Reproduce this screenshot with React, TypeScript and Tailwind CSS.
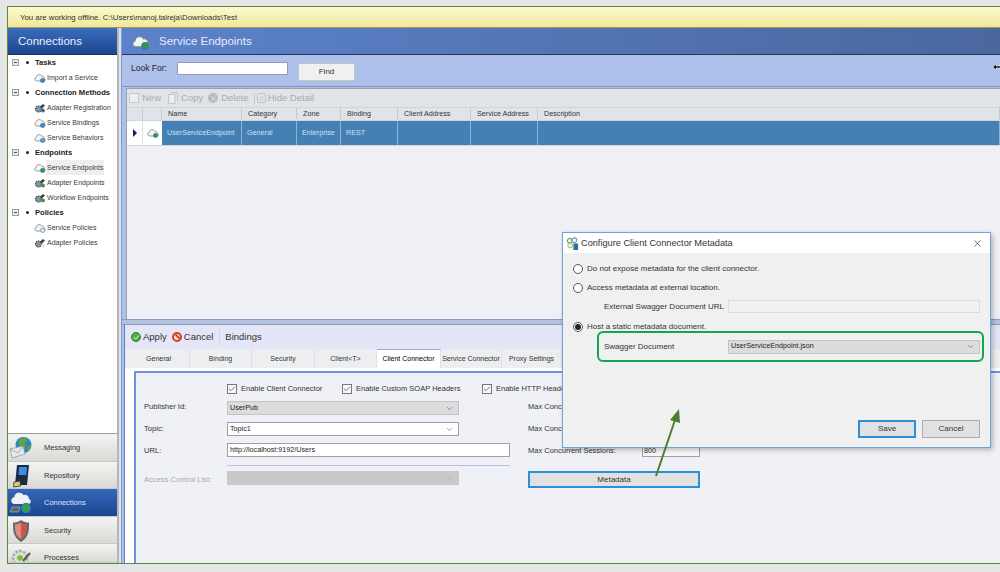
import { ReactNode } from 'react'
import { ChevronDown, ChevronsUp, X, Check } from 'lucide-react'

const font = { fontFamily: '"Liberation Sans", Arial, sans-serif' }

function CloudIcon({ badge = '#2f9a4e', className = 'w-[12px] h-[10px]' }: { badge?: string; className?: string }) {
  return (
    <svg viewBox="0 0 12 10" className={className}>
      <path d="M2.400 8a1.900 1.900 0 0 1-.2-3.700A2.900 2.900 0 0 1 7.600 3a2.300 2.300 0 0 1 2.800 2.500A1.300 1.300 0 0 1 10 8z" fill="#f2f4f6" stroke="#7d8893" strokeWidth="0.800" />
      <circle cx="8.600" cy="7.400" r="2.200" fill={badge} stroke="#2d6ba0" strokeWidth="0.500" />
    </svg>
  )
}

function GearIcon({ tone = '#2f6f9a' }: { tone?: string }) {
  return (
    <svg viewBox="0 0 12 10" className="w-[12px] h-[10px]">
      <circle cx="4.500" cy="6" r="3" fill="#8a939b" stroke="#39424b" strokeWidth="1.200" strokeDasharray="1.400 0.800" />
      <path d="M6 3.500l3-2.500 2 1.500-3 3z" fill="#39424b" />
      <circle cx="9" cy="7.500" r="1.900" fill={tone} />
    </svg>
  )
}

function Row({ label, icon, active }: { label: string; icon: ReactNode; active?: boolean }) {
  return (
    <div className="h-[15px] flex items-center pl-[26px]">
      <span className="w-[12px] flex items-center shrink-0">{icon}</span>
      <span className={`px-[1px] h-[15px] leading-[15px] text-[7px] whitespace-nowrap text-[#3a3a3a] ${active ? 'bg-[#eeeeee]' : ''}`}>{label}</span>
    </div>
  )
}

function Group({ label }: { label: string }) {
  return (
    <div className="h-[15px] flex items-center pl-[4px]">
      <span className="w-[7px] h-[7px] border border-[#9aa0a8] bg-[#e8eaee] flex items-center justify-center shrink-0">
        <span className="w-[3px] h-px bg-[#555]" />
      </span>
      <span className="w-[3px] h-[3px] rounded-full bg-[#222] ml-[7px] shrink-0" />
      <span className="ml-[6px] text-[7.600px] font-bold whitespace-nowrap text-[#1c1c1c]">{label}</span>
    </div>
  )
}

function NavIcon({ name }: { name: string }) {
  if (name === 'Messaging')
    return (
      <svg viewBox="0 0 24 24" className="w-[24px] h-[24px] shrink-0">
        <circle cx="14.500" cy="9" r="8" fill="#2f83c6" />
        <path d="M9 5c2-3 7-4 9-2s-3 3-2 6 0 5-2 5-4-6-5-9z M19 10c2-1 3-1 3 0s-2 5-4 5z" fill="#5ea53c" />
        <path d="M1 13l13-3 2 8-13 4z" fill="#e6e8ec" stroke="#8a939c" strokeWidth="0.700" />
        <path d="M1 13l8 4 5-7" fill="none" stroke="#8a939c" strokeWidth="0.700" />
      </svg>
    )
  if (name === 'Repository')
    return (
      <svg viewBox="0 0 24 24" className="w-[24px] h-[24px] shrink-0">
        <path d="M8 1h12l-2 20H6z" fill="#1d2a40" />
        <path d="M10 3h8l-.6 8H9.500z" fill="#3d8ce0" />
        <path d="M5 18l6-1 .5 5-7 1z" fill="#d9cf78" stroke="#2d2d2d" strokeWidth="0.800" />
      </svg>
    )
  if (name === 'Connections')
    return (
      <svg viewBox="0 0 24 24" className="w-[24px] h-[24px] shrink-0">
        <path d="M5 13a3.400 3.400 0 0 1 .3-6.700A5 5 0 0 1 14.500 4a4 4 0 0 1 5.500 4 2.600 2.600 0 0 1 0 5z" fill="#eef2f7" />
        <circle cx="17" cy="17" r="4.600" fill="#3c9a52" stroke="#2a7ab8" strokeWidth="1.100" />
        <path d="M3 16h8l-1.500 5H1z" fill="#5d6670" stroke="#c9ced4" strokeWidth="0.500" />
      </svg>
    )
  if (name === 'Security')
    return (
      <svg viewBox="0 0 24 24" className="w-[24px] h-[24px] shrink-0">
        <path d="M12 1c3 2 5 2.500 8 2.500 0 9 0 14-8 19.500-8-5.500-8-10.500-8-19.500 3 0 5-.5 8-2.500z" fill="#65696e" />
        <path d="M12 3.500c2.300 1.500 4 2 6 2 0 6 0 11-6 14.500z" fill="#c9564c" />
        <path d="M12 3.500c-2.300 1.500-4 2-6 2 0 6 0 11 6 14.500z" fill="#de8a80" />
      </svg>
    )
  return (
    <svg viewBox="0 0 24 24" className="w-[24px] h-[24px] shrink-0">
      <circle cx="11" cy="12" r="7" fill="#dcdedc" stroke="#a4a8a8" strokeWidth="2.400" strokeDasharray="2.500 1.500" />
      <circle cx="11" cy="12" r="2.800" fill="#7dbd2e" />
      <path d="M14 15l7-8" stroke="#55585a" strokeWidth="2" />
      <path d="M7 22l8-5" stroke="#3a3c3d" strokeWidth="2" />
    </svg>
  )
}

function NavButton({ label, active, h }: { label: string; active?: boolean; h: string }) {
  return (
    <div className={`${h} overflow-hidden border-b border-[#c8c8c8] shrink-0 ${active ? 'bg-gradient-to-b from-[#3468bc] to-[#1d468e]' : 'bg-gradient-to-b from-[#f4f4f2] to-[#d9d9d6]'}`}>
      <div className="h-[27px] flex items-center gap-[11px] pl-[1px]">
        <NavIcon name={label} />
        <span className={`text-[7.500px] pt-[1px] ${active ? 'text-[#dfe8f8]' : 'text-[#333]'}`}>{label}</span>
      </div>
    </div>
  )
}

function Tab({ label, w, active }: { label: string; w: string; active?: boolean }) {
  return (
    <div className={`${w} shrink-0 text-center text-[7px] whitespace-nowrap border-r border-[#dfe1e6] ${active ? 'bg-white h-[19px] leading-[17px] border-t border-t-[#8fa8e0]' : 'leading-[19px] text-[#333]'}`}>{label}</div>
  )
}

function Select({ value, w, disabled, gray }: { value?: string; w: string; disabled?: boolean; gray?: boolean }) {
  return (
    <div className={`${w} h-[14px] flex items-center justify-between pl-[2px] pr-[4px] border text-[7.200px] text-[#222] ${disabled ? 'bg-[#c9c9c9] border-[#c9c9c9]' : gray ? 'bg-[#dcdcdc] border-[#c4c4c4]' : 'bg-white border-[#a0a0a0]'}`}>
      <span>{value}</span>
      <ChevronDown className={`w-[9px] h-[9px] ${disabled ? 'text-[#aaa]' : 'text-[#555]'}`} strokeWidth={1.500} />
    </div>
  )
}

function CheckLabel({ label, w }: { label: string; w: string }) {
  return (
    <div className={`${w} flex items-center gap-[4px] shrink-0`}>
      <span className="w-[10px] h-[10px] border border-[#777] bg-[#f8f8f8] flex items-center justify-center shrink-0">
        <Check className="w-[8px] h-[8px] text-[#333]" strokeWidth={2} />
      </span>
      <span className="text-[7.500px] text-[#333] whitespace-nowrap">{label}</span>
    </div>
  )
}

function Radio({ on, label }: { on?: boolean; label: string }) {
  return (
    <div className="flex items-center gap-[4px] h-[12px]">
      <span className="w-[10px] h-[10px] rounded-full border border-[#555] bg-white flex items-center justify-center shrink-0">
        {on && <span className="w-[6px] h-[6px] rounded-full bg-[#222]" />}
      </span>
      <span className="text-[8px] text-[#333] whitespace-nowrap">{label}</span>
    </div>
  )
}

const headers = [
  ['', 'w-[16px]'],
  ['', 'w-[19px]'],
  ['Name', 'w-[80px]'],
  ['Category', 'w-[55px]'],
  ['Zone', 'w-[44px]'],
  ['Binding', 'w-[57px]'],
  ['Client Address', 'w-[73px]'],
  ['Service Address', 'w-[67px]'],
  ['Description', 'flex-1'],
]

const cells = [
  ['UserServiceEndpoint', 'w-[80px]'],
  ['General', 'w-[55px]'],
  ['Enterprise', 'w-[44px]'],
  ['REST', 'w-[57px]'],
  ['', 'w-[73px]'],
  ['', 'w-[67px]'],
  ['', 'flex-1'],
]

export default function App() {
  return (
    <div className="relative w-[1000px] h-[572px] overflow-hidden bg-[#e6e6e6] pt-[6px] pl-[7px]" style={font}>
      <div className="h-[558px] border-t border-l border-b border-[#5c8a3c] flex flex-col overflow-hidden">
        {/* barra offline */}
        <div className="h-[21px] shrink-0 flex items-center pl-[12px] pt-[1px] text-[7.800px] text-[#333] bg-gradient-to-b from-[#fbf9d0] to-[#f1e89b] border-b border-[#a39a55]">
          You are working offline. C:\Users\manoj.talreja\Downloads\Test
        </div>

        <div className="flex flex-1 min-h-0">
          {/* sidebar */}
          <div className="w-[111px] shrink-0 flex flex-col border-r-2 border-[#b5b5b5]">
            <div className="h-[27px] shrink-0 flex items-center pl-[10px] pt-[1px] text-[11.500px] text-[#e8eefa] bg-gradient-to-b from-[#3a6cbc] to-[#1c4690] border-b border-[#16305f]">
              Connections
            </div>
            <div className="flex-1 bg-white border-b border-[#9a9a9a]">
              <Group label="Tasks" />
              <Row label="Import a Service" icon={<CloudIcon badge="#3f86c8" />} />
              <Group label="Connection Methods" />
              <Row label="Adapter Registration" icon={<GearIcon />} />
              <Row label="Service Bindings" icon={<CloudIcon badge="#3f86c8" />} />
              <Row label="Service Behaviors" icon={<CloudIcon badge="#5f9ccc" />} />
              <Group label="Endpoints" />
              <Row label="Service Endpoints" icon={<CloudIcon />} active />
              <Row label="Adapter Endpoints" icon={<GearIcon tone="#2f9a4e" />} />
              <Row label="Workflow Endpoints" icon={<GearIcon tone="#2f9a4e" />} />
              <Group label="Policies" />
              <Row label="Service Policies" icon={<CloudIcon badge="#e4e8ec" />} />
              <Row label="Adapter Policies" icon={<GearIcon tone="#e4e8ec" />} />
            </div>
            <NavButton label="Messaging" h="h-[28px]" />
            <NavButton label="Repository" h="h-[27px]" />
            <NavButton label="Connections" active h="h-[28px]" />
            <NavButton label="Security" h="h-[27px]" />
            <NavButton label="Processes" h="h-[19px]" />
          </div>

          <div className="w-[2px] shrink-0 bg-[#dfe3ea]" />

          {/* painel principal */}
          <div className="flex-1 min-w-0 flex flex-col border-l border-[#7f9ad6]">
            <div className="h-[27px] shrink-0 flex items-center pl-[9px] pt-[1px] gap-[8px] text-[11.500px] text-[#e6ecf8] bg-gradient-to-r from-[#5c82cb] to-[#4a689e] border-b border-[#25365c]">
              <CloudIcon className="w-[20px] h-[16px]" />
              <span>Service Endpoints</span>
            </div>
            <div className="h-[32px] shrink-0 flex items-start pl-[9px] bg-[#adc0e9] border-b border-[#8291b5]">
              <span className="text-[8.500px] text-[#222] w-[46px] mt-[7px] leading-[13px]">Look For:</span>
              <span className="mt-[7px] w-[111px] h-[13px] bg-white border border-[#8f9bb8] rounded-[1px]" />
              <span className="mt-[8px] ml-[10px] w-[57px] h-[18px] bg-[#f0f0f0] border border-[#c4c4c4] flex items-center justify-center text-[8px] text-[#333]">Find</span>
            </div>

            <div className="h-[232px] shrink-0 pl-[4px] bg-[#adc0e9] flex flex-col pt-[1px]">
              <div className="flex-1 flex flex-col bg-[#eef0f6] border-l border-t border-[#9aa0ac] min-h-0">
                <div className="h-[18px] shrink-0 flex items-center pl-[2px] bg-[#e0e3e8] text-[9.500px] text-[#a8acb2]">
                  <span className="w-[10px] h-[10px] border border-[#c4c7cc] bg-[#eceef0] shrink-0" />
                  <span className="ml-[3px]">New</span>
                  <svg viewBox="0 0 10 12" className="ml-[7px] w-[10px] h-[12px] shrink-0">
                    <path d="M3 .5h6.500v8" fill="none" stroke="#c0c3c8" />
                    <path d="M.5 2.500h6.500v9H.5z" fill="#eceef0" stroke="#c0c3c8" />
                  </svg>
                  <span className="ml-[3px]">Copy</span>
                  <span className="ml-[5px] w-[10px] h-[10px] rounded-full bg-[#b8bbc0] flex items-center justify-center shrink-0">
                    <X className="w-[7px] h-[7px] text-[#e8e8e8]" strokeWidth={3} />
                  </span>
                  <span className="ml-[3px]">Delete</span>
                  <span className="ml-[5px] w-px h-[11px] bg-[#c8cbd0]" />
                  <span className="ml-[2px] w-[9px] h-[10px] rounded-[2px] border border-[#bfc2c6] shrink-0 flex items-center justify-center">
                    <ChevronsUp className="w-[7px] h-[7px] text-[#b4b7bc]" strokeWidth={2} />
                  </span>
                  <span className="ml-[2px]">Hide Detail</span>
                </div>
                <div className="h-[14px] shrink-0 flex bg-[#e0e3e8] border-y border-[#d0d3d8]">
                  {headers.map(([t, w], i) => (
                    <div key={i} className={`${w} shrink-0 border-r border-[#c6cad0] pl-[6px] text-[7.200px] leading-[12px] h-[11px] overflow-hidden whitespace-nowrap text-[#333]`}>{t}</div>
                  ))}
                </div>
                <div className="h-[25px] shrink-0 flex bg-white border-b border-[#d5d9df]">
                  <div className="w-[16px] shrink-0 border-r border-[#dde0e5] flex items-center justify-center">
                    <span className="w-0 h-0 border-y-[4px] border-y-transparent border-l-[4px] border-l-[#12206a]" />
                  </div>
                  <div className="w-[19px] shrink-0 flex items-center justify-center">
                    <CloudIcon />
                  </div>
                  {cells.map(([t, w], i) => (
                    <div key={i} className={`${w} shrink-0 bg-[#4480b4] border-r border-[#8fb3d2] pl-[5px] text-[7.200px] leading-[24px] whitespace-nowrap text-[#cfe0ef]`}>{t}</div>
                  ))}
                </div>
              </div>
            </div>

            {/* painel inferior */}
            <div className="h-[6px] shrink-0 bg-[#b4c2e2] border-y border-[#8d9bb8]" />
            <div className="flex-1 min-h-0 flex pl-[2px] bg-[#adc0e9]">
              <div className="flex-1 min-w-0 flex flex-col bg-[#eff1f7] border-l border-[#5d7fd0]">
                <div className="h-[24px] shrink-0 flex items-center pl-[6px] bg-[#e4e6f8] text-[9.500px] text-[#333]">
                  <span className="w-[10px] h-[10px] rounded-full bg-[#4fae4a] border border-[#2f7d30] flex items-center justify-center">
                    <Check className="w-[7px] h-[7px] text-white" strokeWidth={3} />
                  </span>
                  <span className="ml-[2px]">Apply</span>
                  <span className="ml-[5px] w-[10px] h-[10px] rounded-full border-2 border-[#d8401f] relative overflow-hidden">
                    <span className="absolute left-[-1px] top-[2px] w-[10px] h-[2px] bg-[#d8401f] rotate-45" />
                  </span>
                  <span className="ml-[2px]">Cancel</span>
                  <span className="ml-[6px] w-px h-[16px] bg-[#d4d6ea]" />
                  <span className="ml-[5px]">Bindings</span>
                </div>
                <div className="h-[19px] shrink-0 flex pl-[3px] bg-[#eceef0]">
                  <Tab label="General" w="w-[62px]" />
                  <Tab label="Binding" w="w-[62px]" />
                  <Tab label="Security" w="w-[63px]" />
                  <Tab label="Client<T>" w="w-[62px]" />
                  <Tab label="Client Connector" w="w-[64px]" active />
                  <Tab label="Service Connector" w="w-[61px]" />
                  <Tab label="Proxy Settings" w="w-[60px]" />
                </div>
                <div className="flex-1 min-h-0 pl-[9px] pt-[3px] bg-white">
                  <div className="h-full border-l-2 border-t-2 border-[#6d8fe4] bg-[#eff1f7] flex flex-col pt-[9px]">
                    <div className="h-[14px] flex items-center pl-[91px]">
                      <CheckLabel label="Enable Client Connector" w="w-[115px]" />
                      <CheckLabel label="Enable Custom SOAP Headers" w="w-[140px]" />
                      <CheckLabel label="Enable HTTP Headers" w="w-[100px]" />
                    </div>
                    <div className="flex pl-[8px] pt-[5px]">
                      <div className="w-[384px] shrink-0 flex flex-col">
                        <div className="h-[21px] flex items-start">
                          <span className="w-[83px] text-[7.600px] text-[#333] leading-[12px]">Publisher Id:</span>
                          <Select value="UserPub" w="w-[232px]" gray />
                        </div>
                        <div className="h-[21px] flex items-start">
                          <span className="w-[83px] text-[7.600px] text-[#333] leading-[14px]">Topic:</span>
                          <Select value="Topic1" w="w-[232px]" />
                        </div>
                        <div className="h-[22px] flex items-start">
                          <span className="w-[83px] text-[7.600px] text-[#333] leading-[16px]">URL:</span>
                          <div className="w-[283px] h-[14px] pl-[2px] bg-white border border-[#a0a0a0] text-[7.200px] leading-[12px] text-[#222]">http://localhost:9192/Users</div>
                        </div>
                        <div className="ml-[83px] w-[283px] h-px bg-[#b4c2e0]" />
                        <div className="h-[20px] flex items-start pt-[5px]">
                          <span className="w-[83px] text-[7.600px] text-[#a6a9ae] leading-[18px] whitespace-nowrap">Access Control List:</span>
                          <Select w="w-[232px]" disabled />
                        </div>
                      </div>
                      <div className="flex flex-col">
                        <div className="h-[21px] text-[7.500px] text-[#333] leading-[12px]">Max Concurrent Calls:</div>
                        <div className="h-[21px] text-[7.500px] text-[#333] leading-[14px]">Max Concurrent Instances:</div>
                        <div className="h-[16px] flex items-center text-[7.500px] text-[#333]">
                          <span className="w-[114px] whitespace-nowrap">Max Concurrent Sessions:</span>
                          <span className="w-[58px] h-[12px] bg-[#f8f8f8] border border-[#a0a0a0] pl-[1px] text-[7.200px] leading-[10px]">800</span>
                        </div>
                        <div className="mt-[12px] w-[172px] h-[17px] bg-[#e1e1e1] border-2 border-[#2d8fd8] flex items-center justify-center text-[8px] text-[#333]">Metadata</div>
                      </div>
                    </div>
                  </div>
                </div>
              </div>
            </div>
          </div>
        </div>
      </div>

      {/* cursor de redimensionar */}
      <svg viewBox="0 0 10 10" className="absolute left-[993px] top-[62px] w-[10px] h-[10px]">
        <path d="M0 5l3-3v2h4V2l3 3-3 3V6H3v2z" fill="#111" stroke="#fff" strokeWidth="0.500" />
      </svg>

      {/* dialog */}
      <div className="absolute left-[562px] top-[232px] w-[429px] h-[216px] bg-[#f0f0f0] border border-[#6fa3dc] shadow-[2px_2px_5px_rgba(0,0,0,0.25)] flex flex-col">
        <div className="h-[20px] shrink-0 bg-white flex items-center pl-[3px] pr-[7px]">
          <svg viewBox="0 0 14 14" className="w-[13px] h-[13px] shrink-0">
            <circle cx="4" cy="4" r="2.500" fill="none" stroke="#5aa36a" strokeWidth="1.200" />
            <circle cx="9" cy="3.500" r="2.500" fill="none" stroke="#6a9cc8" strokeWidth="1.200" />
            <circle cx="4.500" cy="9" r="2.500" fill="none" stroke="#a8c85a" strokeWidth="1.200" />
            <rect x="8" y="7" width="5" height="7" fill="#2f6f9f" />
          </svg>
          <span className="ml-[2px] pt-[1px] text-[9.200px] text-[#333]">Configure Client Connector Metadata</span>
          <X className="ml-auto w-[11px] h-[11px] text-[#333]" strokeWidth={1.500} />
        </div>
        <div className="flex-1 flex flex-col pl-[10px] pr-[10px] pt-[10px]">
          <Radio label="Do not expose metadata for the client connector." />
          <div className="mt-[7px]"><Radio label="Access metadata at external location." /></div>
          <div className="mt-[6px] h-[13px] flex items-center pl-[31px]">
            <span className="w-[124px] text-[8px] text-[#333] whitespace-nowrap">External Swagger Document URL</span>
            <span className="w-[252px] h-[13px] border border-[#dcdcdc] bg-[#f0f0f0]" />
          </div>
          <div className="mt-[8px]"><Radio on label="Host a static metadata document." /></div>
          <div className="mt-[7px] h-[13px] flex items-center pl-[31px]">
            <span className="w-[124px] text-[8px] text-[#333] whitespace-nowrap">Swagger Document</span>
            <Select value="UserServiceEndpoint.json" w="w-[252px]" gray />
          </div>
          <div className="mt-auto mb-[9px] flex justify-end gap-[6px]">
            <span className="w-[58px] h-[18px] bg-[#e1e1e1] border-2 border-[#2d8fd8] flex items-center justify-center text-[8px] text-[#333]">Save</span>
            <span className="w-[58px] h-[18px] bg-[#e1e1e1] border border-[#adadad] flex items-center justify-center text-[8px] text-[#333]">Cancel</span>
          </div>
        </div>
      </div>

      {/* destaque verde */}
      <div className="absolute left-[597px] top-[331px] w-[387px] h-[31px] rounded-[6px] border-2 border-[#12a64e]" />

      {/* seta verde */}
      <svg viewBox="0 0 40 80" className="absolute left-[650px] top-[403px] w-[40px] h-[80px]">
        <path d="M6 73L26 14" stroke="#4b7f2e" strokeWidth="2" />
        <path d="M29 6l-9 11 10 3z" fill="#4b7f2e" />
      </svg>
    </div>
  )
}
